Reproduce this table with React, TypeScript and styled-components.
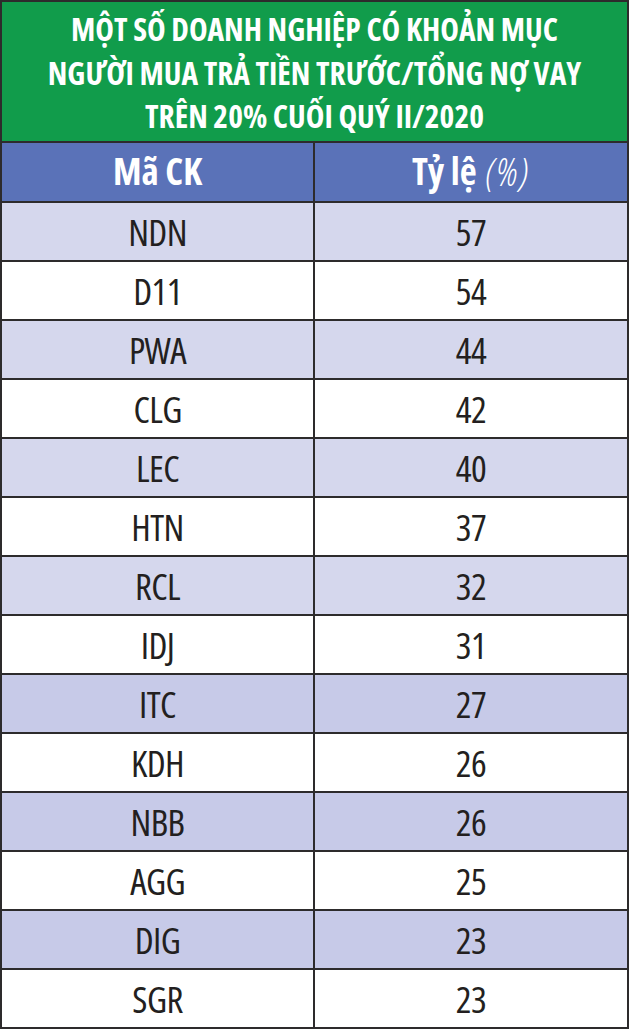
import React from "react";
import styled, { createGlobalStyle } from "styled-components";

const GlobalStyle = createGlobalStyle`
  html, body {
    margin: 0;
    padding: 0;
    background: #ffffff;
  }
  body {
    font-family: "Open Sans", "Liberation Sans", sans-serif;
    font-stretch: 75%;
  }
`;

const Table = styled.div`
  width: 629px;
  box-sizing: border-box;
  display: grid;
  grid-template-columns: 311px 1fr;
  gap: 2px;
  padding: 2px;
  background: #2d2b2c;
`;

const Title = styled.div`
  grid-column: 1 / -1;
  background: #119c4b;
  color: #ffffff;
  font-weight: 700;
  font-size: 31.5px;
  line-height: 43.5px;
  text-align: center;
  padding: 5px 0 3px;
  white-space: nowrap;
`;

const HeadCell = styled.div`
  background: #5a72b8;
  color: #ffffff;
  height: 58px;
  display: flex;
  align-items: center;
  justify-content: center;
  font-size: 37px;
  font-weight: 700;
  gap: 9px;
  padding-bottom: 2px;
  box-sizing: border-box;
`;

const Unit = styled.span`
  font-style: italic;
  font-weight: 300;
  font-size: 38px;
  letter-spacing: 1.5px;
`;

type Tone = "light" | "dark" | "white";

const toneColors: Record<Tone, string> = {
  light: "#d5d7ed",
  dark: "#c7cae8",
  white: "#ffffff",
};

const Cell = styled.div<{ $tone: Tone }>`
  background: ${(p) => toneColors[p.$tone]};
  color: #231f20;
  height: 57px;
  display: flex;
  align-items: center;
  justify-content: center;
  font-size: 37px;
  font-weight: 400;
  letter-spacing: -0.6px;
  box-sizing: border-box;
`;

const rows: { code: string; value: number; tone: Tone }[] = [
  { code: "NDN", value: 57, tone: "light" },
  { code: "D11", value: 54, tone: "white" },
  { code: "PWA", value: 44, tone: "light" },
  { code: "CLG", value: 42, tone: "white" },
  { code: "LEC", value: 40, tone: "light" },
  { code: "HTN", value: 37, tone: "white" },
  { code: "RCL", value: 32, tone: "light" },
  { code: "IDJ", value: 31, tone: "white" },
  { code: "ITC", value: 27, tone: "dark" },
  { code: "KDH", value: 26, tone: "white" },
  { code: "NBB", value: 26, tone: "dark" },
  { code: "AGG", value: 25, tone: "white" },
  { code: "DIG", value: 23, tone: "dark" },
  { code: "SGR", value: 23, tone: "white" },
];

export default function App() {
  return (
    <>
      <GlobalStyle />
      <Table>
        <Title>
          MỘT SỐ DOANH NGHIỆP CÓ KHOẢN MỤC
          <br />
          NGƯỜI MUA TRẢ TIỀN TRƯỚC/TỔNG NỢ VAY
          <br />
          TRÊN 20% CUỐI QUÝ II/2020
        </Title>
        <HeadCell>Mã CK</HeadCell>
        <HeadCell>
          <span>Tỷ lệ</span>
          <Unit>(%)</Unit>
        </HeadCell>
        {rows.map((r) => (
          <React.Fragment key={r.code}>
            <Cell $tone={r.tone}>{r.code}</Cell>
            <Cell $tone={r.tone}>{r.value}</Cell>
          </React.Fragment>
        ))}
      </Table>
    </>
  );
}
